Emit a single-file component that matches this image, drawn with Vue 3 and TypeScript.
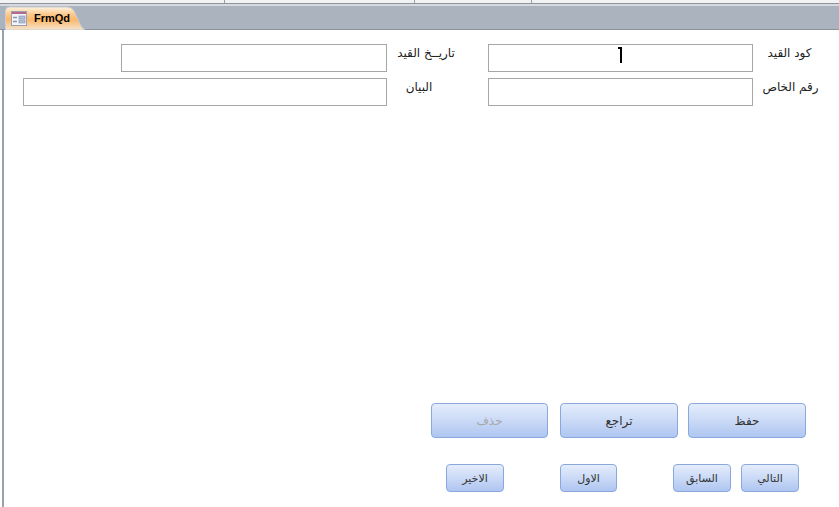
<script setup lang="ts">
const mainActions = [
  { label: 'حذف', disabled: true },
  { label: 'تراجع', disabled: false },
  { label: 'حفظ', disabled: false },
]
const navActions = ['الاخير', 'الاول', 'السابق', 'التالي']
</script>

<template>
  <div class="app">
    <div class="ruler">
      <span class="tick t1"></span>
      <span class="tick t2"></span>
      <span class="tick t3"></span>
    </div>
    <div class="tabbar">
      <div class="tab">
        <svg class="tab-bg" width="80" height="24" viewBox="0 0 80 24">
          <defs>
            <linearGradient id="tabFill" x1="0" y1="0" x2="0" y2="1">
              <stop offset="0" stop-color="#fdf2e2" />
              <stop offset="0.3" stop-color="#fdcb8e" />
              <stop offset="0.55" stop-color="#fdb768" />
              <stop offset="1" stop-color="#f4e4d0" />
            </linearGradient>
          </defs>
          <path d="M0.5 24V5Q0.5 1 4.5 1H62Q67 1 69 5L75 18Q77.5 23 80 24Z" fill="url(#tabFill)" stroke="#c9ccd0" />
        </svg>
        <svg class="tab-icon" width="16" height="15" viewBox="0 0 16 15">
          <rect x="0.5" y="0.5" width="15" height="14" fill="#f1f4f9" stroke="#9a9fb2" />
          <rect x="1" y="1" width="14" height="2" fill="#b8688a" />
          <path d="M2 6.5H6M2 10.5H6" stroke="#8a96ae" stroke-width="1.6" />
          <rect x="8" y="5" width="6" height="3" fill="#b4c0d6" stroke="#7f8fac" stroke-width="0.6" />
          <rect x="8" y="9" width="6" height="3" fill="#b4c0d6" stroke="#7f8fac" stroke-width="0.6" />
        </svg>
        <span class="tab-title">FrmQd</span>
      </div>
    </div>
    <div class="body">
      <div class="form">
        <div class="field date-field"></div>
        <div class="label label-date">تاريــخ القيد</div>
        <div class="field code-field"><span class="caret"></span></div>
        <div class="label label-code">كود القيد</div>
        <div class="field note-field"></div>
        <div class="label label-note">البيان</div>
        <div class="field"></div>
        <div class="label label-own">رقم الخاص</div>
      </div>

      <div class="actions">
        <button
          v-for="a in mainActions"
          :key="a.label"
          class="btn btn-main"
          :class="{ off: a.disabled }"
          type="button"
        >{{ a.label }}</button>
      </div>
      <div class="nav">
        <button v-for="n in navActions" :key="n" class="btn btn-nav" type="button">{{ n }}</button>
      </div>
    </div>
  </div>
</template>

<style>
html,
body {
  margin: 0;
  background: #fff;
  overflow: hidden;
}
</style>

<style scoped>
.app {
  width: 839px;
  height: 507px;
  display: flex;
  flex-direction: column;
  font-family: "DejaVu Sans", "Noto Sans", sans-serif;
  color: #1a1a1a;
  overflow: hidden;
}
.ruler {
  height: 3px;
  background: #f1f2f3;
  border-bottom: 1px solid #8f949b;
  position: relative;
}
.tick {
  position: absolute;
  top: 0;
  width: 1px;
  height: 3px;
  background: #9aa0a8;
}
.t1 { left: 224px; }
.t2 { left: 414px; }
.t3 { left: 531px; }
.tabbar {
  height: 25px;
  background: linear-gradient(#d6dae0 0, #d6dae0 2px, #abb3be 2px);
  border-bottom: 1px solid #8d939b;
  padding-left: 5px;
  display: flex;
  align-items: flex-end;
}
.tab {
  position: relative;
  width: 80px;
  height: 24px;
  margin-bottom: -1px;
  display: flex;
  align-items: center;
  padding-left: 6px;
  gap: 7px;
  box-sizing: border-box;
}
.tab-bg {
  position: absolute;
  left: 0;
  top: 0;
}
.tab-icon,
.tab-title {
  position: relative;
}
.tab-title {
  font-family: "Liberation Sans", Arial, sans-serif;
  font-weight: 700;
  font-size: 11px;
  color: #000;
}
.body {
  flex: 1;
  margin-left: 2px;
  border-left: 2px solid #9aa1ab;
  background: #fff;
  display: flex;
  flex-direction: column;
  min-height: 0;
}
.form {
  display: grid;
  grid-template-columns: 19px 98px 266px 101px 265px 1fr;
  grid-template-rows: 28px 28px;
  row-gap: 6px;
  margin-top: 14px;
}
.field {
  border: 1px solid #a6a6a6;
  box-sizing: border-box;
  display: flex;
  justify-content: center;
}
.date-field { grid-column: 3; }
.note-field {
  grid-column: 1 / 4;
  margin-left: 19px;
}
.label {
  font-size: 12px;
  line-height: 14px;
  direction: rtl;
  white-space: nowrap;
  text-align: center;
  padding-top: 2px;
  color: #222;
}
.label-date { padding-right: 23px; }
.label-note { padding-right: 37px; }
.label-code { padding-right: 13px; }
.label-own { padding-right: 11px; }
.caret {
  width: 2px;
  height: 16px;
  margin-top: 2px;
  background: #000;
  position: relative;
}
.caret::before {
  content: "";
  position: absolute;
  left: -2px;
  top: 0;
  width: 2px;
  height: 2px;
  background: #000;
}
.actions {
  display: flex;
  margin-top: 297px;
  margin-left: 427px;
}
.nav {
  display: flex;
  margin-top: 26px;
  margin-left: 442px;
}
.btn {
  font-family: inherit;
  font-size: 12px;
  color: #333;
  padding: 0;
  border: 1px solid #8aa8de;
  border-radius: 4px;
  background: linear-gradient(#e5edfc, #afc6f1);
  box-sizing: border-box;
}
.btn-main {
  width: 118px;
  height: 35px;
}
.btn-main:nth-child(1) { width: 117px; }
.btn-main:nth-child(2) { margin-left: 12px; }
.btn-main:nth-child(3) { margin-left: 10px; }
.btn-nav {
  width: 58px;
  height: 28px;
  font-size: 11px;
}
.btn-nav:nth-child(2) {
  width: 57px;
  margin-left: 56px;
}
.btn-nav:nth-child(3) { margin-left: 56px; }
.btn-nav:nth-child(4) { margin-left: 10px; }
.off {
  color: #a8a8a8;
}
</style>
